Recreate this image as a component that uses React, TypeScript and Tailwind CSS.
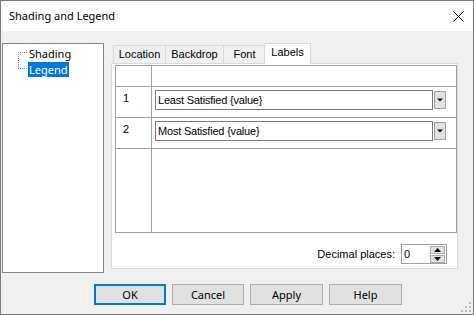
import React from 'react';

const font = { fontFamily: '"Liberation Sans", Arial, sans-serif' };
const uiFont = { fontFamily: '"Noto Sans", "Open Sans", sans-serif' };

function Dropdown({ value }: { value: string }) {
  return (
    <div className="flex items-center">
      <div className="w-[278px] h-[20px] border border-[#7a7a7a] bg-white flex items-center pl-[2px] text-[11px] tracking-[-0.2px] text-black">
        {value}
      </div>
      <div className="ml-[1px] w-[12px] h-[18px] border border-[#a0a0a0] bg-[#e1e1e1] flex items-center justify-center">
        <svg width="6" height="4" viewBox="0 0 6 4">
          <path d="M0 0.5H6L3 3.5Z" fill="#000" />
        </svg>
      </div>
    </div>
  );
}

export default function App() {
  const tabs = [
    { label: 'Location', w: 'w-[52px]' },
    { label: 'Backdrop', w: 'w-[58px]' },
    { label: 'Font', w: 'w-[42px]' },
  ];

  return (
    <div className="w-[474px] h-[315px] bg-[#f0f0f0] border border-[#7a7a7a] flex flex-col relative text-black" style={font}>
      {/* Title bar */}
      <div className="h-[30px] bg-white flex items-center justify-between pl-[8px] pr-[9px]">
        <span className="text-[11px]" style={uiFont}>Shading and Legend</span>
        <svg width="11" height="11" viewBox="0 0 11 11">
          <path d="M0.5 0.5L10.5 10.5M10.5 0.5L0.5 10.5" stroke="#000" strokeWidth="1" />
        </svg>
      </div>

      {/* Body */}
      <div className="flex pt-[12px] pl-[1px]">
        {/* Tree */}
        <div className="w-[102px] h-[230px] border border-[#828790] bg-white relative">
          <svg className="absolute left-[13px] top-[8px]" width="12" height="20" viewBox="0 0 12 20">
            <g fill="#808080">
              {[0, 2, 4, 6, 8, 10, 12, 14, 16].map((y) => (
                <rect key={'v' + y} x="2" y={y} width="1" height="1" />
              ))}
              {[4, 6, 8, 10].map((x) => (
                <rect key={'a' + x} x={x} y="0" width="1" height="1" />
              ))}
              {[4, 6, 8, 10].map((x) => (
                <rect key={'b' + x} x={x} y="16" width="1" height="1" />
              ))}
            </g>
          </svg>
          <div className="pl-[25px] pt-[2px] text-[11px] leading-[15px]" style={uiFont}>
            <div className="h-[16px] pl-[1px]">Shading</div>
            <div className="inline-block bg-[#0078d7] text-white px-[1px] h-[15px]">Legend</div>
          </div>
        </div>

        {/* Tabs */}
        <div className="ml-[7px] w-[347px] flex flex-col">
          <div className="h-[20px] flex items-end pl-[2px] text-[11px]">
            {tabs.map((t) => (
              <div
                key={t.label}
                className={`${t.w} h-[18px] border-l border-t border-[#d9d9d9] last:border-r flex items-center justify-center`}
              >
                {t.label}
              </div>
            ))}
            <div className="-ml-[1px] w-[47px] h-[21px] -mb-[1px] relative z-10 bg-white border-l border-t border-r border-[#d9d9d9] flex items-center justify-center pb-[3px]">
              Labels
            </div>
          </div>

          <div className="h-[206px] border border-[#d9d9d9] bg-white pl-[3px] pt-[1px] flex flex-col">
            {/* Grid */}
            <div className="w-[342px] border border-[#a0a0a0] flex flex-col text-[11px]">
              <div className="h-[20px] flex">
                <div className="w-[36px] border-r border-[#a0a0a0]" />
                <div className="flex-1" />
              </div>
              <div className="h-[31px] flex border-t border-[#a0a0a0]">
                <div className="w-[36px] border-r border-[#a0a0a0] pl-[7px] pt-[3px]">1</div>
                <div className="flex-1 pl-[3px] pt-[3px]">
                  <Dropdown value="Least Satisfied {value}" />
                </div>
              </div>
              <div className="h-[31px] flex border-t border-[#a0a0a0]">
                <div className="w-[36px] border-r border-[#a0a0a0] pl-[7px] pt-[3px]">2</div>
                <div className="flex-1 pl-[3px] pt-[3px]">
                  <Dropdown value="Most Satisfied {value}" />
                </div>
              </div>
              <div className="h-[84px] flex border-t border-[#a0a0a0]">
                <div className="w-[36px] border-r border-[#a0a0a0]" />
                <div className="flex-1" />
              </div>
            </div>

            {/* Decimal places */}
            <div className="mt-[11px] flex items-center justify-end pr-[10px] text-[11px]">
              <span className="mr-[6px]">Decimal places:</span>
              <div className="w-[46px] h-[20px] border border-[#a0a0a0] bg-white flex items-center justify-between pl-[2px] pr-[1px]">
                <span>0</span>
                <div className="flex flex-col gap-[1px]">
                  <div className="w-[15px] h-[8px] bg-[#e1e1e1] border border-[#adadad] flex items-center justify-center">
                    <svg width="7" height="4" viewBox="0 0 7 4"><path d="M3.5 0L7 4H0Z" fill="#000" /></svg>
                  </div>
                  <div className="w-[15px] h-[8px] bg-[#e1e1e1] border border-[#adadad] flex items-center justify-center">
                    <svg width="7" height="4" viewBox="0 0 7 4"><path d="M0 0H7L3.5 4Z" fill="#000" /></svg>
                  </div>
                </div>
              </div>
            </div>
          </div>
        </div>
      </div>

      {/* Buttons */}
      <div className="mt-[11px] pl-[93px] flex gap-[6px] text-[11px]" style={uiFont}>
        <button className="w-[72px] h-[21px] bg-[#e1e1e1] border-2 border-[#0078d7] flex items-center justify-center leading-none">OK</button>
        <button className="w-[72px] h-[21px] bg-[#e1e1e1] border border-[#adadad] flex items-center justify-center leading-none">Cancel</button>
        <button className="w-[73px] h-[21px] bg-[#e1e1e1] border border-[#adadad] flex items-center justify-center leading-none">Apply</button>
        <button className="w-[73px] h-[21px] bg-[#e1e1e1] border border-[#adadad] flex items-center justify-center leading-none">Help</button>
      </div>

      {/* Size grip */}
      <svg className="absolute right-[2px] bottom-[2px]" width="10" height="10" viewBox="0 0 10 10">
        <g fill="#bcbcbc">
          <rect x="8" y="0" width="2" height="2" />
          <rect x="4" y="4" width="2" height="2" />
          <rect x="8" y="4" width="2" height="2" />
          <rect x="0" y="8" width="2" height="2" />
          <rect x="4" y="8" width="2" height="2" />
          <rect x="8" y="8" width="2" height="2" />
        </g>
      </svg>
    </div>
  );
}
